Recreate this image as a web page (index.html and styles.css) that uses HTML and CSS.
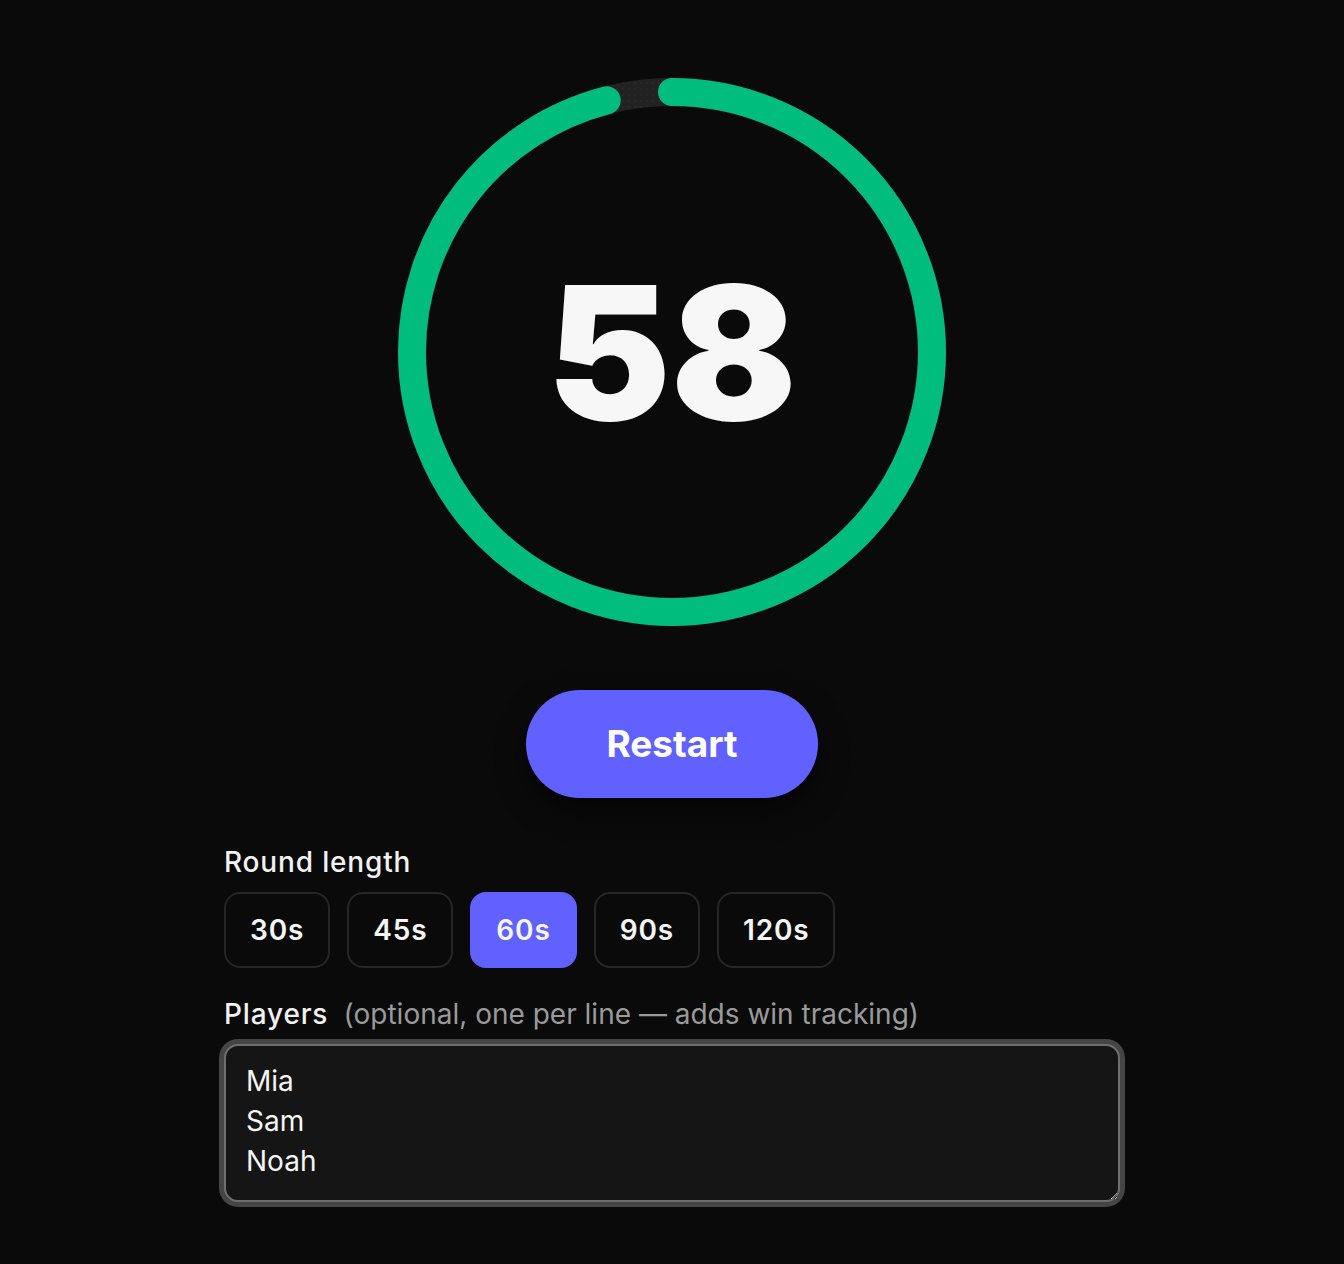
FILE: index.html
```html
<html>
<head>
    <title>Round Timer</title>
    <link rel="stylesheet" href="styles.css">
</head>
<body>
    <div class="app">
        <section class="dial">
            <svg class="dial-ring" width="548" height="548" viewBox="0 0 548 548">
                <defs>
                    <pattern id="track-dots" width="6" height="6" patternUnits="userSpaceOnUse">
                        <rect width="6" height="6" fill="#222"/>
                        <circle cx="3" cy="3" r="0.7" fill="#333"/>
                    </pattern>
                </defs>
                <circle class="dial-track" cx="274" cy="274" r="260"/>
                <circle id="dial-progress" class="dial-progress" cx="274" cy="274" r="260"/>
            </svg>
            <div id="dial-count" class="dial-count">58</div>
        </section>

        <div class="actions">
            <button class="restart">Restart</button>
        </div>

        <section class="field">
            <div class="field-label">Round length</div>
            <div class="lengths">
                <button class="length">30s</button>
                <button class="length">45s</button>
                <button class="length active">60s</button>
                <button class="length">90s</button>
                <button class="length">120s</button>
            </div>
        </section>

        <section class="field">
            <div class="field-label">
                Players
                <span class="field-hint">(optional, one per line — adds win tracking)</span>
            </div>
            <textarea id="players" class="players" rows="3">Mia
Sam
Noah</textarea>
        </section>
    </div>
    <script>
        // progress arc: fraction of the round still left
        const remaining = 57.55;
        const total = 60;
        const ring = document.getElementById('dial-progress');
        const length = 2 * Math.PI * 260;
        ring.style.strokeDasharray = length;
        ring.style.strokeDashoffset = length * (1 - remaining / total);

        const players = document.getElementById('players');
        players.focus();
        players.selectionStart = players.selectionEnd = players.value.length;
    </script>
</body>
</html>
```

FILE: styles.css
```css
html, body {
    margin: 0;
    padding: 0;
    background: #0a0a0a;
    color: #f2f2f2;
    font-family: Inter, "Noto Sans", sans-serif;
}

.app {
    width: 896px;
    margin: 0 auto;
    padding-top: 78px;
}

.dial {
    position: relative;
    width: 548px;
    height: 548px;
    margin: 0 auto;
}

.dial-ring {
    display: block;
    transform: rotate(-90deg);
}

.dial-track,
.dial-progress {
    fill: none;
    stroke-width: 28;
}

.dial-track {
    stroke: url(#track-dots);
}

.dial-progress {
    stroke: #00bd7e;
    stroke-linecap: round;
}

.dial-count {
    position: absolute;
    inset: 0;
    display: flex;
    align-items: center;
    justify-content: center;
    font-size: 186px;
    font-weight: 900;
    color: #f7f7f7;
    line-height: 1;
    padding-top: 2px;
}

.actions {
    display: flex;
    justify-content: center;
    margin-top: 64px;
}

.restart {
    width: 292px;
    height: 108px;
    border: none;
    border-radius: 54px;
    background: #6161ff;
    color: #fff;
    font-family: inherit;
    font-size: 37px;
    font-weight: 700;
    padding-bottom: 3px;
    box-shadow: 0 12px 28px rgba(0, 0, 0, 0.6);
    cursor: pointer;
}

.field {
    margin-top: 48px;
}

.field + .field {
    margin-top: 30px;
}

.field-label {
    font-size: 28px;
    font-weight: 500;
    line-height: 32px;
    letter-spacing: 0.03em;
}

.field-hint {
    margin-left: 7px;
    color: #9a9a9a;
    font-weight: 400;
    letter-spacing: 0;
}

.lengths {
    display: flex;
    gap: 17px;
    margin-top: 14px;
}

.length {
    height: 76px;
    padding: 0 24px;
    border: 2px solid #262626;
    border-radius: 16px;
    background: #0a0a0a;
    color: #f5f5f5;
    font-family: inherit;
    font-size: 28px;
    font-weight: 600;
    letter-spacing: 0.03em;
}

.length.active {
    background: #6161ff;
    border-color: #6161ff;
}

.players {
    display: block;
    box-sizing: border-box;
    width: 896px;
    height: 158px;
    margin-top: 14px;
    padding: 15px 20px;
    border: 2px solid #6e6e6e;
    border-radius: 14px;
    background: #151515;
    color: #f5f5f5;
    font-family: inherit;
    font-size: 28px;
    line-height: 40px;
    outline: none;
    box-shadow: 0 0 0 5px #454545;
    caret-color: #f5f5f5;
}
```
